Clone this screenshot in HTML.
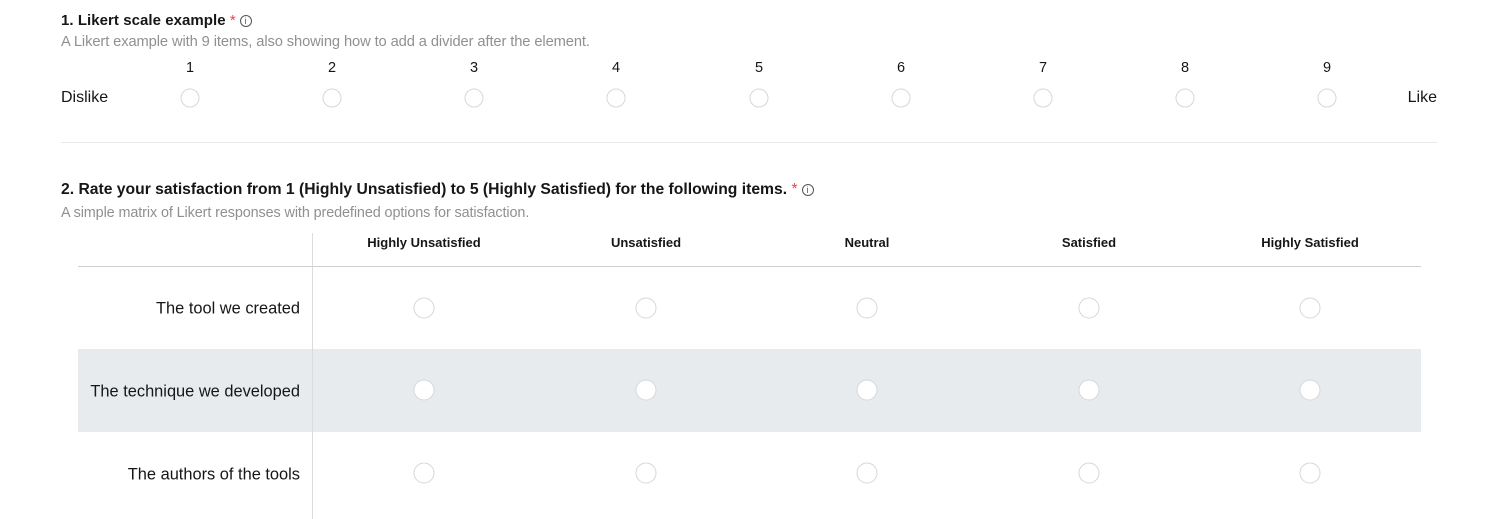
<!DOCTYPE html>
<html><head><meta charset="utf-8"><style>
*{margin:0;padding:0;box-sizing:border-box}
body{width:1485px;height:519px;background:#fff;font-family:"Liberation Sans",sans-serif;color:#161616;position:relative;overflow:hidden}
.a{position:absolute;white-space:nowrap}
.t{font-size:15px;font-weight:bold;color:#161616}
.d{font-size:14.4px;color:#909090;letter-spacing:-0.1px}
.star{color:#e5484d;font-weight:normal}
.info{display:inline-block;width:12px;height:12px;border:1px solid #555;border-radius:50%;font-size:9px;line-height:10px;text-align:center;font-weight:normal;vertical-align:1px;margin-left:4px;color:#555}
.n{font-size:14.5px;transform:translateX(-50%);top:60px}
.r{position:absolute;width:19px;height:19px;border:1px solid #d4d7dc;border-radius:50%;background:#fff;transform:translate(-50%,-50%)}
.h{font-size:13px;font-weight:bold;transform:translateX(-50%);top:235px}
.l{font-size:16.4px;right:1185px;transform:translateY(-50%)}
</style></head><body>
<div class="a t" style="left:61px;top:12px;letter-spacing:0.05px">1. Likert scale example <span class="star">*</span><span class="info">i</span></div>
<div class="a d" style="left:61px;top:34px;font-size:14.7px">A Likert example with 9 items, also showing how to add a divider after the element.</div>
<div class="a n" style="left:190px">1</div><div class="a n" style="left:332px">2</div><div class="a n" style="left:474px">3</div><div class="a n" style="left:616px">4</div><div class="a n" style="left:759px">5</div><div class="a n" style="left:901px">6</div><div class="a n" style="left:1043px">7</div><div class="a n" style="left:1185px">8</div><div class="a n" style="left:1327px">9</div>
<div class="a" style="left:61px;top:89px;font-size:16px">Dislike</div>
<div class="a" style="right:48px;top:89px;font-size:16px">Like</div>
<div class="r" style="left:190px;top:98px"></div><div class="r" style="left:332px;top:98px"></div><div class="r" style="left:474px;top:98px"></div><div class="r" style="left:616px;top:98px"></div><div class="r" style="left:759px;top:98px"></div><div class="r" style="left:901px;top:98px"></div><div class="r" style="left:1043px;top:98px"></div><div class="r" style="left:1185px;top:98px"></div><div class="r" style="left:1327px;top:98px"></div>
<div class="a" style="left:61px;top:142px;width:1376px;height:1px;background:#e6e8eb"></div>
<div class="a t" style="left:61px;top:181px;font-size:15.7px">2. Rate your satisfaction from 1 (Highly Unsatisfied) to 5 (Highly Satisfied) for the following items. <span class="star">*</span><span class="info">i</span></div>
<div class="a d" style="left:61px;top:205px">A simple matrix of Likert responses with predefined options for satisfaction.</div>
<div class="a" style="left:78px;top:349px;width:1343px;height:83px;background:#e8ebee"></div>
<div class="a" style="left:312px;top:233px;width:1px;height:286px;background:#dcdcdc"></div>
<div class="a" style="left:78px;top:266px;width:1343px;height:1px;background:#d0d0d0"></div>
<div class="a h" style="left:424px">Highly Unsatisfied</div><div class="a h" style="left:646px">Unsatisfied</div><div class="a h" style="left:867px">Neutral</div><div class="a h" style="left:1089px">Satisfied</div><div class="a h" style="left:1310px">Highly Satisfied</div>
<div class="a l" style="top:309px">The tool we created</div>
<div class="a l" style="top:392px">The technique we developed</div>
<div class="a l" style="top:475px">The authors of the tools</div>
<div class="r" style="left:424px;top:308px;width:21px;height:21px"></div><div class="r" style="left:646px;top:308px;width:21px;height:21px"></div><div class="r" style="left:867px;top:308px;width:21px;height:21px"></div><div class="r" style="left:1089px;top:308px;width:21px;height:21px"></div><div class="r" style="left:1310px;top:308px;width:21px;height:21px"></div>
<div class="r" style="left:424px;top:390px;width:21px;height:21px"></div><div class="r" style="left:646px;top:390px;width:21px;height:21px"></div><div class="r" style="left:867px;top:390px;width:21px;height:21px"></div><div class="r" style="left:1089px;top:390px;width:21px;height:21px"></div><div class="r" style="left:1310px;top:390px;width:21px;height:21px"></div>
<div class="r" style="left:424px;top:473px;width:21px;height:21px"></div><div class="r" style="left:646px;top:473px;width:21px;height:21px"></div><div class="r" style="left:867px;top:473px;width:21px;height:21px"></div><div class="r" style="left:1089px;top:473px;width:21px;height:21px"></div><div class="r" style="left:1310px;top:473px;width:21px;height:21px"></div>
</body></html>
